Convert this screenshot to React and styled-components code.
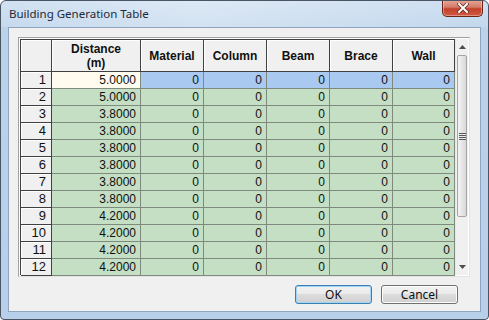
import React from 'react'
import styled, { createGlobalStyle } from 'styled-components'

const Global = createGlobalStyle`
    html, body { margin: 0; padding: 0; background: #ffffff; }
    body { font-family: "Liberation Sans", Arial, sans-serif; }
`

const distances = ['5.0000', '5.0000', '3.8000', '3.8000', '3.8000', '3.8000', '3.8000', '3.8000', '4.2000', '4.2000', '4.2000', '4.2000']
const columns = ['Material', 'Column', 'Beam', 'Brace', 'Wall']

export default function App() {
    return (
        <>
            <Global />
            <Window>
                <TitleBar>
                    <Title>Building Generation Table</Title>
                    <CloseButton>
                        <svg width="12" height="10" viewBox="0 0 12 10">
                            <path d="M2 1 L10 9 M10 1 L2 9" stroke="#5a2a22" strokeWidth="3.4" strokeLinecap="square" />
                            <path d="M2 1 L10 9 M10 1 L2 9" stroke="#ffffff" strokeWidth="2" strokeLinecap="square" />
                        </svg>
                    </CloseButton>
                </TitleBar>
                <Client>
                    <GridFrame>
                        <Grid>
                            <Corner />
                            <HeadCell>Distance<br />(m)</HeadCell>
                            {columns.map(c => <HeadCell key={c}>{c}</HeadCell>)}
                            {distances.map((d, i) => (
                                <React.Fragment key={i}>
                                    <RowHead>{i + 1}</RowHead>
                                    <Cell $tone={i === 0 ? 'current' : 'green'}>{d}</Cell>
                                    {columns.map(c => <Cell key={c} $tone={i === 0 ? 'blue' : 'green'}>0</Cell>)}
                                </React.Fragment>
                            ))}
                            {/* partly hidden row under the visible area */}
                            <RowHead />
                            <Cell $tone="green" />
                            {columns.map(c => <Cell key={c} $tone="green" />)}
                        </Grid>
                        <ScrollBar>
                            <Arrow>
                                <svg width="7" height="4" viewBox="0 0 7 4"><path d="M0 4 L3.5 0 L7 4 Z" fill="#4d4d4d" /></svg>
                            </Arrow>
                            <Track>
                                <Thumb>
                                    <Grip />
                                </Thumb>
                            </Track>
                            <Arrow>
                                <svg width="7" height="4" viewBox="0 0 7 4"><path d="M0 0 L7 0 L3.5 4 Z" fill="#4d4d4d" /></svg>
                            </Arrow>
                        </ScrollBar>
                    </GridFrame>
                    <Buttons>
                        <Button $default>OK</Button>
                        <Button>Cancel</Button>
                    </Buttons>
                </Client>
            </Window>
        </>
    )
}

const Window = styled.div`
    width: 489px;
    height: 320px;
    box-sizing: border-box;
    border: 1px solid #4a5563;
    border-radius: 6px 6px 4px 4px;
    background: linear-gradient(180deg, #c9dcf0 0px, #bad2ea 30px, #b7cfe8 100%);
    padding: 0 7px 7px 7px;
    display: flex;
    flex-direction: column;
    overflow: hidden;
`

const TitleBar = styled.div`
    height: 26px;
    display: flex;
    align-items: flex-start;
    justify-content: space-between;
    background: linear-gradient(90deg, rgba(255,255,255,0.15), rgba(255,255,255,0.35) 40%, rgba(255,255,255,0.1));
    margin: 0 -7px;
    padding: 0 5px 0 8px;
`

const Title = styled.div`
    font-family: "Noto Sans", "Liberation Sans", sans-serif;
    font-size: 11.5px;
    color: #1e2a38;
    margin-top: 5px;
`

const CloseButton = styled.div`
    width: 41px;
    height: 17px;
    box-sizing: border-box;
    margin-top: -1px;
    border: 1px solid #6a2418;
    border-top: none;
    border-radius: 0 0 5px 5px;
    background: linear-gradient(180deg, #e8a898 0%, #d47a68 45%, #c2412c 55%, #d05a40 100%);
    box-shadow: inset 0 0 0 1px rgba(255,255,255,0.35);
    display: flex;
    align-items: center;
    justify-content: center;
`

const Client = styled.div`
    flex: 1;
    background: #f0f0f0;
    border: 1px solid #8fa5bf;
    padding: 9px 10px 0 9px;
    display: flex;
    flex-direction: column;
`

const GridFrame = styled.div`
    height: 240px;
    box-sizing: border-box;
    border: 1px solid #a0a0a0;
    border-right-color: #e3e3e3;
    border-bottom-color: #e3e3e3;
    padding: 1px;
    display: flex;
    overflow: hidden;
    background: #ffffff;
`

const Grid = styled.div`
    display: grid;
    grid-template-columns: 31px 89px 63px 63px 63px 63px 62px;
    grid-auto-rows: 17px;
    grid-template-rows: 32px;
    align-content: start;
    background: #c4dfc4;
    border-left: 1px solid #404040;
    border-top: 1px solid #404040;
    font-size: 12px;
`

const Corner = styled.div`
    background: #f0f0f0;
    border-right: 1px solid #404040;
    border-bottom: 1px solid #404040;
    box-shadow: inset 1px 1px 0 #ffffff;
`

const HeadCell = styled.div`
    background: #f0f0f0;
    border-right: 1px solid #404040;
    border-bottom: 1px solid #404040;
    box-shadow: inset 1px 1px 0 #ffffff;
    font-weight: bold;
    color: #101010;
    text-align: center;
    line-height: 14px;
    display: flex;
    align-items: center;
    justify-content: center;
`

const RowHead = styled.div`
    background: #f0f0f0;
    border-right: 1px solid #404040;
    border-bottom: 1px solid #404040;
    box-shadow: inset 1px 1px 0 #ffffff;
    color: #101010;
    font-size: 13px;
    text-align: right;
    padding-right: 5px;
    line-height: 16px;
`

const tones = {
    green: '#c4dfc4',
    blue: '#a9c9f1',
    current: '#fffbef',
}

const Cell = styled.div`
    background: ${p => tones[p.$tone]};
    border-right: 1px solid #7f8a7f;
    border-bottom: 1px solid #7f8a7f;
    color: #101010;
    text-align: right;
    padding-right: 4px;
    line-height: 16px;
`

const ScrollBar = styled.div`
    width: 17px;
    display: flex;
    flex-direction: column;
    background: #f0f0f0;
    border-left: 1px solid #e8e8e8;
`

const Arrow = styled.div`
    height: 16px;
    display: flex;
    align-items: center;
    justify-content: center;
`

const Track = styled.div`
    flex: 1;
    display: flex;
    flex-direction: column;
`

const Thumb = styled.div`
    height: 162px;
    margin: 0 1px;
    box-sizing: border-box;
    border: 1px solid #a4a4a4;
    border-radius: 2px;
    background: linear-gradient(90deg, #f4f4f4, #e6e6e6 50%, #d8d8d8);
    display: flex;
    align-items: center;
    justify-content: center;
`

const Grip = styled.div`
    width: 7px;
    height: 7px;
    background: repeating-linear-gradient(180deg, #5a5a5a 0 1px, #e8e8e8 1px 2px);
`

const Buttons = styled.div`
    display: flex;
    justify-content: flex-end;
    gap: 9px;
    margin-top: 8px;
    padding-right: 12px;
`

const Button = styled.div`
    width: 77px;
    height: 19px;
    box-sizing: border-box;
    border: 1px solid ${p => (p.$default ? '#3c7fb1' : '#707070')};
    border-radius: 3px;
    background: linear-gradient(180deg, #f2f2f2 0%, #ebebeb 45%, #dddddd 50%, #cfcfcf 100%);
    box-shadow: ${p => (p.$default ? 'inset 0 0 0 1px #9fd5f3' : 'inset 0 0 0 1px #fcfcfc')};
    font-family: "Noto Sans", "Liberation Sans", sans-serif;
    font-size: 12px;
    color: #101010;
    display: flex;
    align-items: center;
    justify-content: center;
`
